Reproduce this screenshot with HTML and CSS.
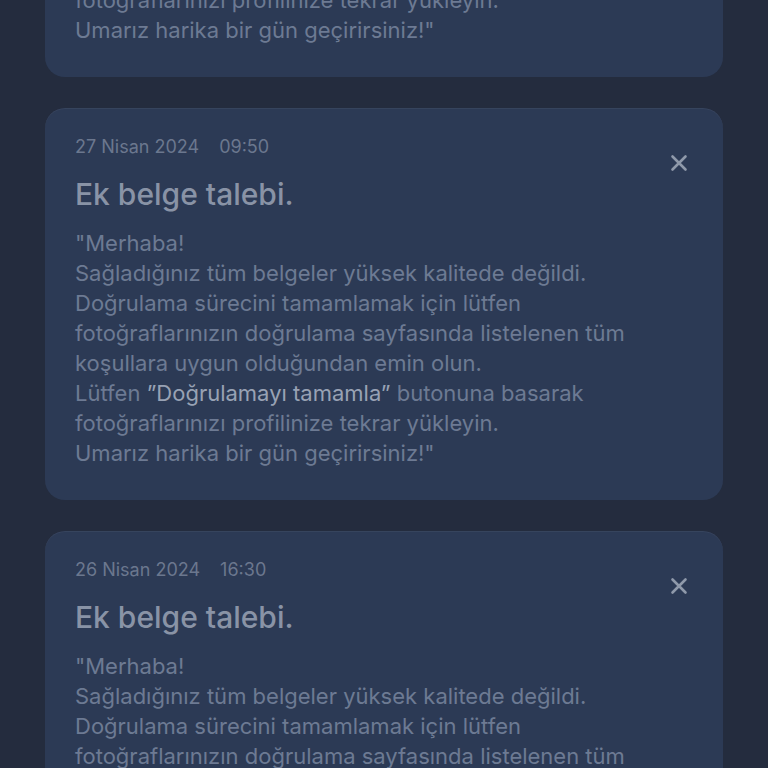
FILE: index.html
```html
<!DOCTYPE html>
<html lang="tr">
<head>
<meta charset="utf-8">
<link rel="stylesheet" href="styles.css">
</head>
<body>
<main class="list">
  <article class="card">
    <div class="meta"><span>28 Nisan 2024</span><span>11:15</span></div>
    <h2 class="title">Ek belge talebi.</h2>
    <p class="body">"Merhaba!<br>Sağladığınız tüm belgeler yüksek kalitede değildi.<br>Doğrulama sürecini tamamlamak için lütfen<br>fotoğraflarınızın doğrulama sayfasında listelenen tüm<br>koşullara uygun olduğundan emin olun.<br>Lütfen <span class="hl">”Doğrulamayı tamamla”</span> butonuna basarak<br>fotoğraflarınızı profilinize tekrar yükleyin.<br>Umarız harika bir gün geçirirsiniz!"</p>
    <button class="close" aria-label="Kapat"><svg viewBox="0 0 18 18" width="18" height="18"><path d="M2.5 2.5L15.5 15.5M15.5 2.5L2.5 15.5" stroke="currentColor" stroke-width="2.6" stroke-linecap="round"/></svg></button>
  </article>
  <article class="card">
    <div class="meta"><span>27 Nisan 2024</span><span>09:50</span></div>
    <h2 class="title">Ek belge talebi.</h2>
    <p class="body">"Merhaba!<br>Sağladığınız tüm belgeler yüksek kalitede değildi.<br>Doğrulama sürecini tamamlamak için lütfen<br>fotoğraflarınızın doğrulama sayfasında listelenen tüm<br>koşullara uygun olduğundan emin olun.<br>Lütfen <span class="hl">”Doğrulamayı tamamla”</span> butonuna basarak<br>fotoğraflarınızı profilinize tekrar yükleyin.<br>Umarız harika bir gün geçirirsiniz!"</p>
    <button class="close" aria-label="Kapat"><svg viewBox="0 0 18 18" width="18" height="18"><path d="M2.5 2.5L15.5 15.5M15.5 2.5L2.5 15.5" stroke="currentColor" stroke-width="2.6" stroke-linecap="round"/></svg></button>
  </article>
  <article class="card">
    <div class="meta"><span>26 Nisan 2024</span><span>16:30</span></div>
    <h2 class="title">Ek belge talebi.</h2>
    <p class="body">"Merhaba!<br>Sağladığınız tüm belgeler yüksek kalitede değildi.<br>Doğrulama sürecini tamamlamak için lütfen<br>fotoğraflarınızın doğrulama sayfasında listelenen tüm<br>koşullara uygun olduğundan emin olun.<br>Lütfen <span class="hl">”Doğrulamayı tamamla”</span> butonuna basarak<br>fotoğraflarınızı profilinize tekrar yükleyin.<br>Umarız harika bir gün geçirirsiniz!"</p>
    <button class="close" aria-label="Kapat"><svg viewBox="0 0 18 18" width="18" height="18"><path d="M2.5 2.5L15.5 15.5M15.5 2.5L2.5 15.5" stroke="currentColor" stroke-width="2.6" stroke-linecap="round"/></svg></button>
  </article>
</main>
</body>
</html>
```
FILE: styles.css
```css
html, body {
  margin: 0;
  padding: 0;
  background: #242c3e;
  height: 100%;
  overflow: hidden;
}
body {
  font-family: Inter, "Noto Sans", "DejaVu Sans", sans-serif;
}
.list {
  display: flex;
  flex-direction: column;
  gap: 31px;
  padding: 0 45px;
  margin-top: -315px;
}
.card {
  position: relative;
  background: #2c3a55;
  border-radius: 20px;
  box-shadow: inset 0 1px 0 rgba(255,255,255,0.05);
  padding: 29px 30px 32px;
  height: 392px;
  box-sizing: border-box;
}
.meta {
  display: flex;
  gap: 20px;
  font-size: 18px;
  line-height: 20px;
  color: #6b778e;
}
.title {
  margin: 19px 0 0;
  font-size: 30px;
  line-height: 36px;
  font-weight: 500;
  color: #8993a6;
}
.body {
  margin: 16px 0 0;
  font-size: 22px;
  line-height: 30px;
  color: #6d7a93;
}
.hl {
  color: #98a2b4;
}
.close {
  position: absolute;
  top: 46px;
  right: 35px;
  width: 18px;
  height: 18px;
  padding: 0;
  border: 0;
  background: none;
  color: #8f99aa;
  display: flex;
}
```
